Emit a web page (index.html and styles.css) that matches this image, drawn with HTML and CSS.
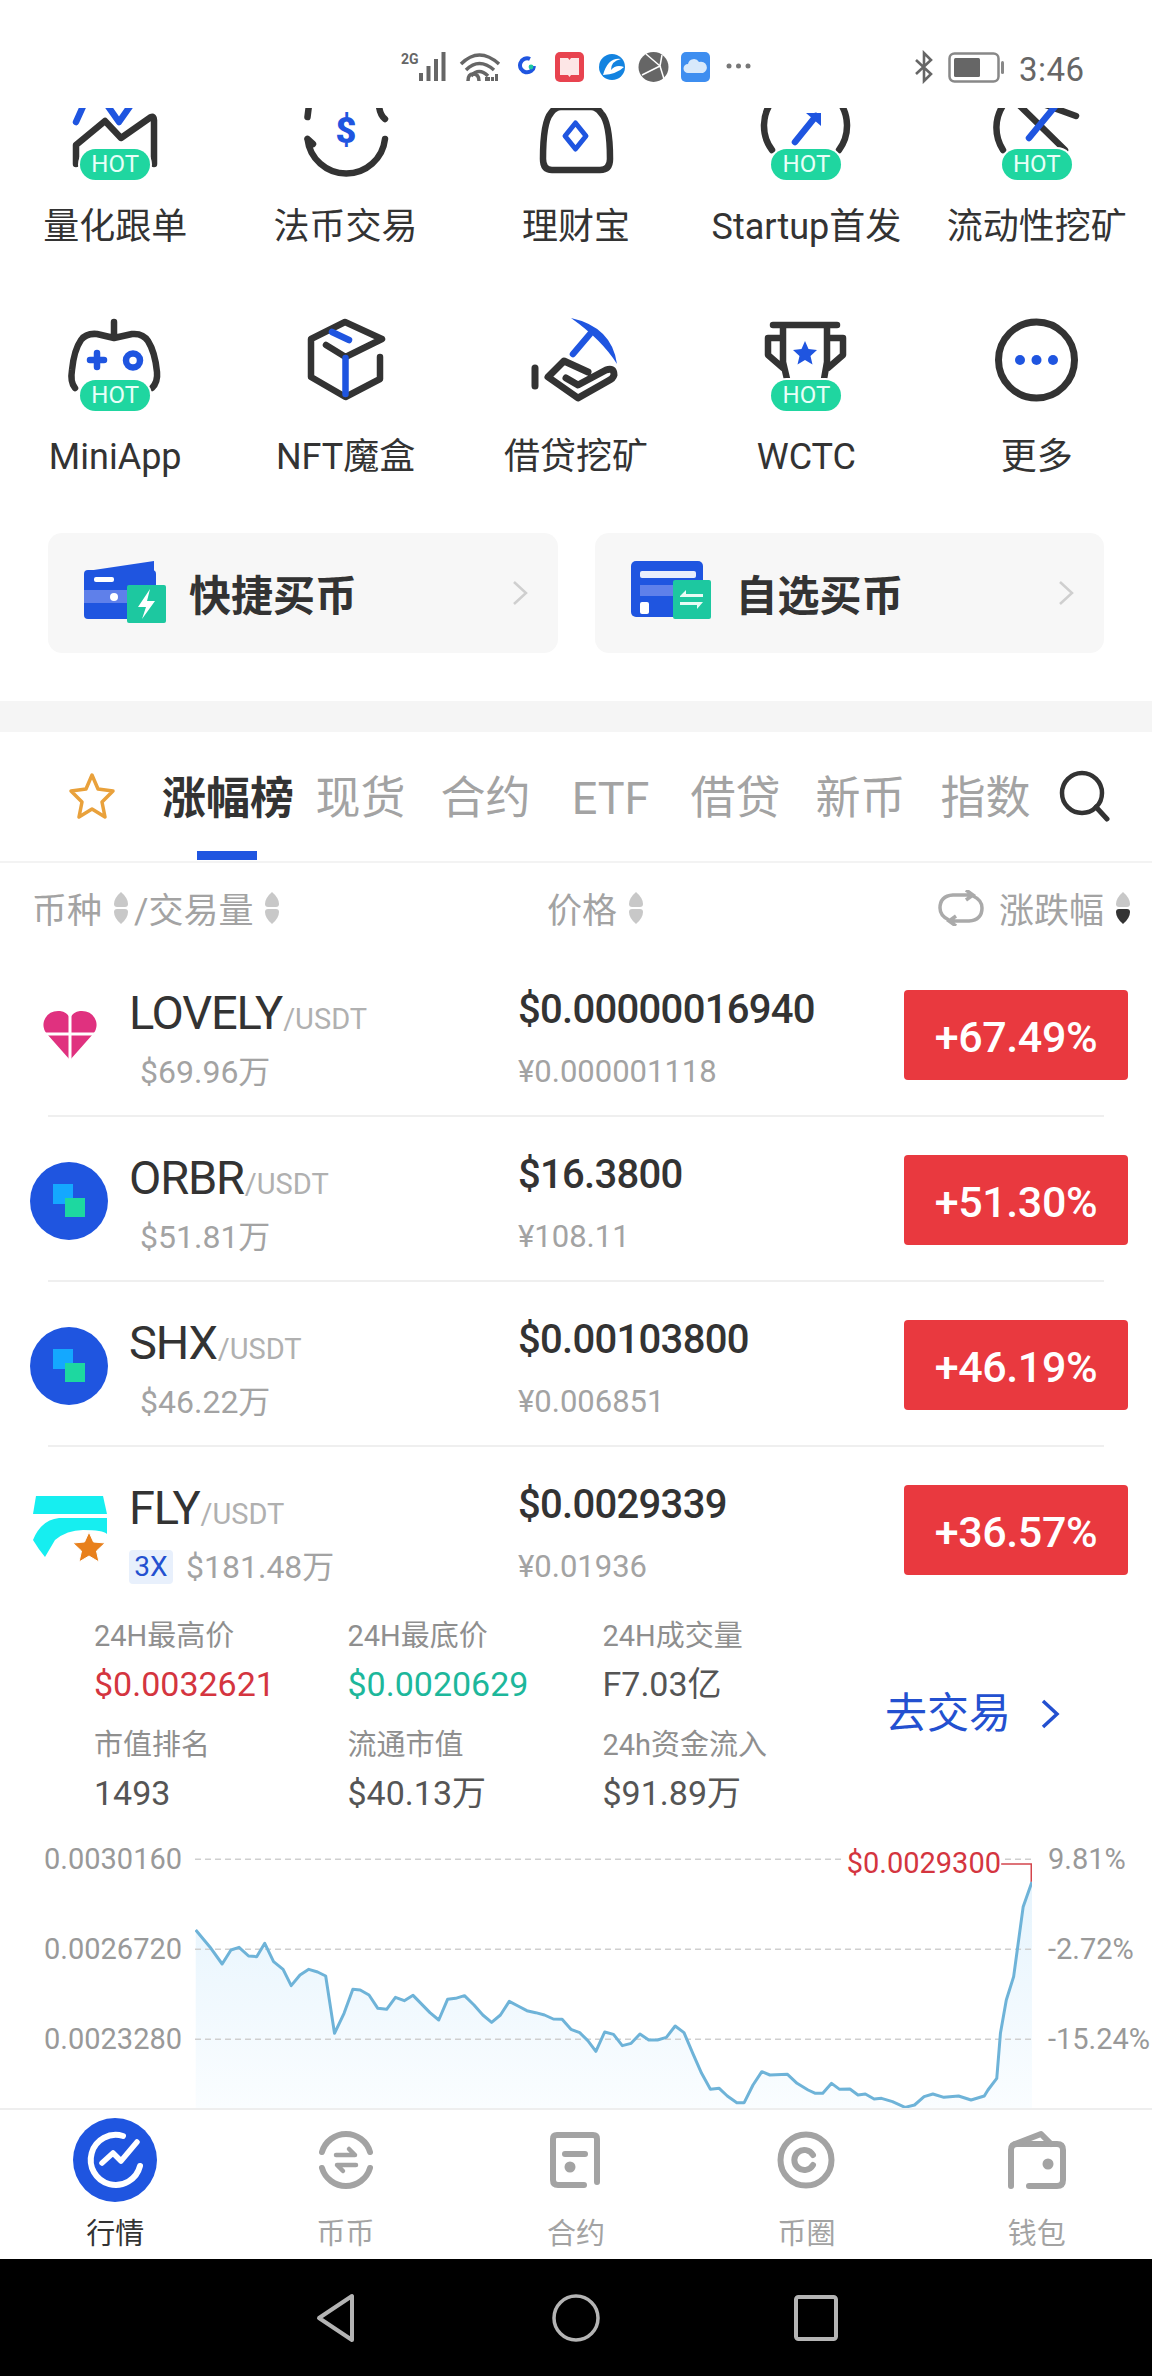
FILE: index.html
```html
<!DOCTYPE html>
<html lang="zh">
<head>
<meta charset="utf-8">
<title>行情</title>
<link rel="stylesheet" href="styles.css">
</head>
<body>
<div class="page">
  <header class="status">
    <svg class="s-signal" viewBox="0 0 49 34"><text x="0" y="14" class="s-2g">2G</text><g fill="#666"><rect x="18" y="23" width="4" height="8"/><rect x="25.500" y="16" width="4" height="15"/><rect x="33" y="9" width="4" height="22"/><rect x="40.500" y="2" width="4" height="29"/></g></svg>
    <svg class="s-wifi" viewBox="0 0 44 34"><g fill="none" stroke="#666" stroke-width="3.500"><path d="M2 14 Q20 -4 40 14"/><path d="M7 20 Q20 7 35 20"/><path d="M12 26 Q20 17 29 26"/><path d="M9 31 Q9 24 14 24 Q20 24 20 31"/></g><g fill="#666"><rect x="26" y="27" width="5" height="4"/><rect x="36" y="24" width="3" height="7"/><rect x="32" y="27" width="3" height="4"/></g></svg>
    <svg class="s-ring" viewBox="0 0 18 34"><path d="M12 9 A7 7 0 1 0 16 16" fill="none" stroke="#1f55e0" stroke-width="4"/><circle cx="13" cy="17" r="2.4" fill="#1dc8a0"/></svg>
    <svg class="s-book" viewBox="0 0 29 34"><rect x="0" y="2" width="29" height="30" rx="5" fill="#e8434f"/><path d="M5 8 H13 L14.500 10 L16 8 H24 V25 H16 L14.500 27 L13 25 H5Z" fill="#fde6e6"/></svg>
    <svg class="s-swirl" viewBox="0 0 26 34"><circle cx="13" cy="17" r="13" fill="#1383e0"/><path d="M4 25 Q9 7 22 9 Q12 11 12 20 Q17 14 25 17 Q18 24 4 25Z" fill="#fff"/></svg>
    <svg class="s-ball" viewBox="0 0 31 34"><circle cx="15.500" cy="17" r="15" fill="#666"/><path d="M8 4 L22 16 L4 25 M22 16 L26 29 M22 16 L24 5" fill="none" stroke="#fff" stroke-width="1.500"/></svg>
    <svg class="s-cloud" viewBox="0 0 29 34"><rect x="0" y="2" width="29" height="30" rx="5" fill="#3e8ef0"/><path d="M7 23 A4.500 4.500 0 0 1 7 14 A6 6 0 0 1 18 12 A5.500 5.500 0 0 1 22 23Z" fill="#d8e9fb"/></svg>
    <svg class="s-dots" viewBox="0 0 25 34"><g fill="#777"><circle cx="3" cy="16" r="2.500"/><circle cx="12.500" cy="16" r="2.500"/><circle cx="22" cy="16" r="2.500"/></g></svg>
    <svg class="s-bt" viewBox="0 0 22 34"><path d="M3 10 L18 24 L11 31 V3 L18 10 L3 24" fill="none" stroke="#666" stroke-width="2.600"/></svg>
    <svg class="s-batt" viewBox="0 0 56 34"><rect x="1.500" y="3.500" width="49" height="28" rx="5" fill="none" stroke="#888" stroke-width="2.500"/><rect x="6" y="8" width="26" height="19" rx="1.500" fill="#666"/><rect x="53" y="11" width="3" height="13" rx="1.500" fill="#888"/></svg>
    <span class="time">3:46</span>
  </header>

  <nav class="grid grid-top">
    <a class="cell">
      <div class="ico">
        <svg class="ico-top" viewBox="0 0 120 72"><path class="dk" d="M21 56 V37 L50 13 L66 30 L96 9 Q99 8 99 12 V56"/><path class="bl" d="M21 14 L30 -6 M50 -6 L64 14 L78 -6"/></svg>
        <span class="hot hot-top">HOT</span>
      </div>
      <span class="lbl">量化跟单</span>
    </a>
    <a class="cell">
      <div class="ico">
        <svg class="ico-top" viewBox="0 0 120 72"><path class="dk" d="M23 -3 L21.500 9 M93 -2 Q94 7 99 11 M21.500 31 A39 39 0 0 0 99 31 M21.500 31 L27 36"/><text x="60" y="35" class="dollar">$</text></svg>
      </div>
      <span class="lbl">法币交易</span>
    </a>
    <a class="cell">
      <div class="ico">
        <svg class="ico-top" viewBox="0 0 120 72"><path class="dk" d="M27 51 Q27 14 35 5 Q39 -1 45 -1 H75 Q81 -1 85 5 Q94 14 94 51 Q94 62 84 62 H36 Q27 62 27 51Z"/><path class="bl bl-thin" d="M59.500 15 L70 28 L59.500 41 L49 28Z"/></svg>
      </div>
      <span class="lbl">理财宝</span>
    </a>
    <a class="cell">
      <div class="ico">
        <svg class="ico-top" viewBox="0 0 120 72"><path class="dk" d="M27 -8 A41 41 0 0 0 26 42 M92 -8 A41 41 0 0 1 93 42"/><path class="bl" d="M49 34 L70 8"/><path class="bl-fill" d="M60 5 H75 V18 Z"/></svg>
        <span class="hot hot-top">HOT</span>
      </div>
      <span class="lbl">Startup首发</span>
    </a>
    <a class="cell">
      <div class="ico">
        <svg class="ico-top" viewBox="0 0 120 72"><path class="dk" d="M27 -4 A41 41 0 0 0 26 42 M41 -4 L88 42 M66 -4 L99 8"/><path class="bl" d="M52 30 L80 -4"/></svg>
        <span class="hot hot-top">HOT</span>
      </div>
      <span class="lbl">流动性挖矿</span>
    </a>
  </nav>

  <nav class="grid grid-bot">
    <a class="cell">
      <div class="ico">
        <svg class="ico-bot" viewBox="0 0 120 105"><path class="dk" d="M59 12 V28 M20 78 Q15 72 17 60 Q19 40 26 30 Q31 23 42 24 L59 28 L77 24 Q88 23 93 31 Q100 42 102 62 Q103 72 97 78"/><path class="bl" d="M35 50 H49 M42 43 V57"/><circle cx="78" cy="50.500" r="7" class="bl"/></svg>
        <span class="hot hot-bot">HOT</span>
      </div>
      <span class="lbl">MiniApp</span>
    </a>
    <a class="cell">
      <div class="ico">
        <svg class="ico-bot" viewBox="0 0 120 105"><path class="dk" d="M40 35 L59.500 47 L96 29 L59 12 L25 29 V67 L59.500 87 L94 69 V47"/><path class="bl" d="M46 22 L63 30 M59.500 48 V84"/></svg>
      </div>
      <span class="lbl">NFT魔盒</span>
    </a>
    <a class="cell">
      <div class="ico">
        <svg class="ico-bot" viewBox="0 0 120 105"><path class="bl-fill" d="M55 8 Q96 17 101 54 Q86 30 55 8Z"/><path class="bl" d="M74 24 L57 44"/><path class="dk dk-7" d="M19 58 V76 M50 68 L62 75 L90 60 Q98 57 98 65 Q97 69 92 71 L62 88 L32 67 L48 51 L72 62"/></svg>
      </div>
      <span class="lbl">借贷挖矿</span>
    </a>
    <a class="cell">
      <div class="ico">
        <svg class="ico-bot" viewBox="0 0 120 105"><path class="dk" d="M27 15 H91 M37 18 V52 L41 69 M81 18 V52 L78 69 M36 28 H22 V45 L37 58 M82 28 H97 V45 L82 58"/><path class="bl-fill" d="M59 31 L62.500 39 L71 40 L64.500 46 L66.500 54.500 L59 50 L51.500 54.500 L53.500 46 L47 40 L55.500 39Z"/></svg>
        <span class="hot hot-bot">HOT</span>
      </div>
      <span class="lbl">WCTC</span>
    </a>
    <a class="cell">
      <div class="ico">
        <svg class="ico-bot" viewBox="0 0 120 105"><circle cx="59.500" cy="50" r="38" class="dk dk-7"/><g class="bl-fill"><circle cx="43" cy="50" r="5"/><circle cx="59.500" cy="50" r="5"/><circle cx="76" cy="50" r="5"/></g></svg>
      </div>
      <span class="lbl">更多</span>
    </a>
  </nav>

  <div class="buy">
    <a class="buy-card">
      <svg class="buy-ico" viewBox="0 0 82 62"><path d="M3 10 L70 0 V10Z" fill="#1f55e0"/><rect x="0" y="9" width="72" height="49" rx="4" fill="#1f55e0"/><rect x="0" y="29" width="72" height="13" fill="#5f80ea"/><rect x="10" y="16" width="20" height="5" rx="2" fill="#fff"/><circle cx="30" cy="36" r="4" fill="#fff"/><rect x="43" y="24" width="39" height="38" rx="2" fill="#1dc8a0"/><path d="M66 28 L54 46 H62 L58 58 L71 40 H63Z" fill="#fff"/></svg>
      <span class="buy-txt">快捷买币</span>
      <svg class="buy-arrow" viewBox="0 0 16 26"><path d="M2 2 L14 13 L2 24" fill="none" stroke="#cfcfcf" stroke-width="2.500"/></svg>
    </a>
    <a class="buy-card">
      <svg class="buy-ico buy-ico2" viewBox="0 0 82 62"><rect x="0" y="1" width="72" height="56" rx="5" fill="#1f55e0"/><rect x="9" y="11" width="56" height="7" rx="2" fill="#e8eefc"/><rect x="9" y="25" width="55" height="11" fill="#5f80ea"/><rect x="9" y="42" width="9" height="12" rx="2" fill="#fff"/><rect x="42" y="20" width="38" height="39" rx="2" fill="#1dc8a0"/><path d="M49 36 L55 30 V34 H72 V37 H49Z M72 42 L66 49 V45 H49 V42Z" fill="#e8fbf5"/></svg>
      <span class="buy-txt">自选买币</span>
      <svg class="buy-arrow" viewBox="0 0 16 26"><path d="M2 2 L14 13 L2 24" fill="none" stroke="#cfcfcf" stroke-width="2.500"/></svg>
    </a>
  </div>

  <div class="band"></div>

  <div class="tabs">
    <svg class="star" viewBox="0 0 50 50"><path d="M25 4 L31 18 L46 20 L35 31 L38 46 L25 38 L12 46 L15 31 L4 20 L19 18Z" fill="none" stroke="#e9a13b" stroke-width="3.500" stroke-linejoin="round"/></svg>
    <span class="tab-active">涨幅榜</span>
    <span class="tab">现货</span>
    <span class="tab">合约</span>
    <span class="tab">ETF</span>
    <span class="tab">借贷</span>
    <span class="tab">新币</span>
    <span class="tab">指数</span>
    <svg class="search" viewBox="0 0 52 52"><circle cx="24" cy="23" r="20" fill="none" stroke="#333" stroke-width="4.500"/><path d="M38 37 L49 49" stroke="#333" stroke-width="5" stroke-linecap="round"/></svg>
  </div>

  <div class="thead">
    <div class="th th-coin">
      <span>币种</span>
      <svg class="sort" viewBox="0 0 18 32"><path class="sort-off" d="M9 0 Q16 6 16 12 Q16 15 13 15 H5 Q2 15 2 12 Q2 6 9 0Z"/><path class="sort-off" d="M9 32 Q16 26 16 20 Q16 17 13 17 H5 Q2 17 2 20 Q2 26 9 32Z"/></svg>
      <span class="th-slash">/交易量</span>
      <svg class="sort" viewBox="0 0 18 32"><path class="sort-off" d="M9 0 Q16 6 16 12 Q16 15 13 15 H5 Q2 15 2 12 Q2 6 9 0Z"/><path class="sort-off" d="M9 32 Q16 26 16 20 Q16 17 13 17 H5 Q2 17 2 20 Q2 26 9 32Z"/></svg>
    </div>
    <div class="th th-price">
      <span>价格</span>
      <svg class="sort" viewBox="0 0 18 32"><path class="sort-off" d="M9 0 Q16 6 16 12 Q16 15 13 15 H5 Q2 15 2 12 Q2 6 9 0Z"/><path class="sort-off" d="M9 32 Q16 26 16 20 Q16 17 13 17 H5 Q2 17 2 20 Q2 26 9 32Z"/></svg>
    </div>
    <div class="th th-change">
      <svg class="swap" viewBox="0 0 48 36"><path d="M12 30 Q3 26 3 18 Q3 6 16 5 H34 M36 6 Q45 10 45 18 Q45 30 32 31 H14 M29 0 L36 5 L29 10 M19 26 L12 31 L19 36" fill="none" stroke="#aaa" stroke-width="3.500"/></svg>
      <span>涨跌幅</span>
      <svg class="sort" viewBox="0 0 18 32"><path class="sort-off" d="M9 0 Q16 6 16 12 Q16 15 13 15 H5 Q2 15 2 12 Q2 6 9 0Z"/><path class="sort-on" d="M9 32 Q16 26 16 20 Q16 17 13 17 H5 Q2 17 2 20 Q2 26 9 32Z"/></svg>
    </div>
  </div>

  <div class="mrow">
    <div class="tok">
      <svg class="tok-heart" viewBox="0 0 56 50"><path d="M28 50 L5 24 Q0 18 2 11 Q6 0 18 1 Q25 2 28 8 Q31 2 38 1 Q50 0 54 11 Q56 18 51 24Z" fill="#e0317f"/><path d="M28 4 V50 M0 24 H56" stroke="#fff" stroke-width="3"/></svg>
    </div>
    <div class="info">
      <div class="sym">LOVELY<small>/USDT</small></div>
      <div class="vol">$69.96万</div>
    </div>
    <div class="px">
      <div class="usd">$0.00000016940</div>
      <div class="cny">¥0.000001118</div>
    </div>
    <div class="chg">+67.49%</div>
  </div>
  <div class="mrow">
    <div class="tok">
      <svg class="tok-c" viewBox="0 0 78 78"><circle cx="39" cy="39" r="39" fill="#1f55e0"/><rect x="23" y="22" width="20" height="20" fill="#14a8ff"/><rect x="35" y="36" width="20" height="19" fill="#1dd8a0"/></svg>
    </div>
    <div class="info">
      <div class="sym">ORBR<small>/USDT</small></div>
      <div class="vol">$51.81万</div>
    </div>
    <div class="px">
      <div class="usd">$16.3800</div>
      <div class="cny">¥108.11</div>
    </div>
    <div class="chg">+51.30%</div>
  </div>
  <div class="mrow">
    <div class="tok">
      <svg class="tok-c" viewBox="0 0 78 78"><circle cx="39" cy="39" r="39" fill="#1f55e0"/><rect x="23" y="22" width="20" height="20" fill="#14a8ff"/><rect x="35" y="36" width="20" height="19" fill="#1dd8a0"/></svg>
    </div>
    <div class="info">
      <div class="sym">SHX<small>/USDT</small></div>
      <div class="vol">$46.22万</div>
    </div>
    <div class="px">
      <div class="usd">$0.00103800</div>
      <div class="cny">¥0.006851</div>
    </div>
    <div class="chg">+46.19%</div>
  </div>
  <div class="mrow mrow-last">
    <div class="tok">
      <svg class="tok-fly" viewBox="0 0 78 72"><path d="M5 0 H72 L76 18 H2Z" fill="#16eef0"/><path d="M2 44 Q10 24 28 22 H76 V38 Q72 34 52 34 Q36 34 24 44 L14 61 Q8 54 2 44Z" fill="#16eef0"/><path d="M58 36 L62.500 46 L74 47 L65.500 55 L68 66 L58 60 L48 66 L50.500 55 L42 47 L53.500 46Z" fill="#e8801c" stroke="#fff" stroke-width="1"/></svg>
    </div>
    <div class="info">
      <div class="sym">FLY<small>/USDT</small></div>
      <div class="vol vol-lev"><span class="lev">3X</span><span>$181.48万</span></div>
    </div>
    <div class="px">
      <div class="usd">$0.0029339</div>
      <div class="cny">¥0.01936</div>
    </div>
    <div class="chg">+36.57%</div>
  </div>

  <div class="detail">
    <div class="stats">
      <div class="stat"><span class="k">24H最高价</span><span class="v v-red">$0.0032621</span></div>
      <div class="stat"><span class="k">24H最底价</span><span class="v v-green">$0.0020629</span></div>
      <div class="stat"><span class="k">24H成交量</span><span class="v">F7.03亿</span></div>
      <div class="stat"><span class="k">市值排名</span><span class="v">1493</span></div>
      <div class="stat"><span class="k">流通市值</span><span class="v">$40.13万</span></div>
      <div class="stat"><span class="k">24h资金流入</span><span class="v">$91.89万</span></div>
    </div>
    <a class="go">去交易<svg class="go-arrow" viewBox="0 0 20 30"><path d="M3 2 L17 15 L3 28" fill="none" stroke="#2350d0" stroke-width="3.500"/></svg></a>
  </div>

  <div class="chart">
    <div class="axis axis-l"><span>0.0030160</span><span>0.0026720</span><span>0.0023280</span></div>
    <svg class="plot" viewBox="265 642 1140 882" preserveAspectRatio="none">
      <defs><linearGradient id="area" x1="0" y1="0" x2="0" y2="1"><stop offset="0" stop-color="#e6f4fd"/><stop offset="1" stop-color="#fafdff"/></linearGradient></defs>
      <path fill="url(#area)" d="M266 990 L285 1040 L302 1092 L314 1050 L325 1042 L338 1068 L349 1070 L360 1030 L372 1085 L385 1108 L396 1157 L408 1125 L420 1108 L432 1116 L443 1128 L455 1300 L468 1240 L480 1168 L490 1170 L502 1185 L514 1225 L526 1228 L538 1192 L550 1202 L562 1186 L585 1238 L597 1260 L609 1198 L620 1195 L632 1187 L645 1215 L657 1245 L669 1267 L681 1245 L693 1204 L705 1218 L717 1232 L729 1238 L741 1245 L753 1257 L765 1258 L777 1288 L789 1298 L800 1322 L811 1354 L823 1296 L835 1303 L847 1337 L859 1330 L871 1302 L883 1320 L895 1320 L907 1312 L919 1278 L931 1298 L943 1360 L955 1420 L967 1468 L979 1465 L990 1488 L1003 1508 L1013 1508 L1025 1455 L1037 1415 L1048 1425 L1072 1423 L1085 1450 L1100 1470 L1110 1480 L1120 1480 L1132 1450 L1143 1468 L1157 1467 L1168 1485 L1178 1482 L1190 1497 L1200 1495 L1215 1505 L1232 1522 L1245 1515 L1258 1490 L1270 1482 L1285 1492 L1305 1488 L1322 1500 L1340 1488 L1345 1470 L1357 1435 L1362 1300 L1370 1200 L1380 1130 L1393 920 L1405 845 V1524 H266Z"/>
      <g class="grid-line"><path d="M265 778 H1405"/><path d="M265 1048 H1405"/><path d="M265 1318 H1405"/></g>
      <path class="price-line" d="M266 990 L285 1040 L302 1092 L314 1050 L325 1042 L338 1068 L349 1070 L360 1030 L372 1085 L385 1108 L396 1157 L408 1125 L420 1108 L432 1116 L443 1128 L455 1300 L468 1240 L480 1168 L490 1170 L502 1185 L514 1225 L526 1228 L538 1192 L550 1202 L562 1186 L585 1238 L597 1260 L609 1198 L620 1195 L632 1187 L645 1215 L657 1245 L669 1267 L681 1245 L693 1204 L705 1218 L717 1232 L729 1238 L741 1245 L753 1257 L765 1258 L777 1288 L789 1298 L800 1322 L811 1354 L823 1296 L835 1303 L847 1337 L859 1330 L871 1302 L883 1320 L895 1320 L907 1312 L919 1278 L931 1298 L943 1360 L955 1420 L967 1468 L979 1465 L990 1488 L1003 1508 L1013 1508 L1025 1455 L1037 1415 L1048 1425 L1072 1423 L1085 1450 L1100 1470 L1110 1480 L1120 1480 L1132 1450 L1143 1468 L1157 1467 L1168 1485 L1178 1482 L1190 1497 L1200 1495 L1215 1505 L1232 1522 L1245 1515 L1258 1490 L1270 1482 L1285 1492 L1305 1488 L1322 1500 L1340 1488 L1345 1470 L1357 1435 L1362 1300 L1370 1200 L1380 1130 L1393 920 L1405 845"/>
      <path class="lead" d="M1363 792 H1404 V845"/>
    </svg>
    <span class="last-price">$0.0029300</span>
    <div class="axis axis-r"><span>9.81%</span><span>-2.72%</span><span>-15.24%</span></div>
  </div>

  <footer class="tabbar">
    <a class="tb tb-on">
      <svg class="tb-ico" viewBox="0 0 84 84"><circle cx="42" cy="42" r="42" fill="#1f55e0"/><path d="M50 18 A25 25 0 1 0 67 48" fill="none" stroke="#fff" stroke-width="6" stroke-linecap="round"/><path d="M29 45 L40 35 L48 43 L64 24" fill="none" stroke="#fff" stroke-width="5.500" stroke-linecap="round" stroke-linejoin="round"/></svg>
      <span>行情</span>
    </a>
    <a class="tb">
      <svg class="tb-ico" viewBox="0 0 84 84"><path class="tg" d="M18 34 A25 25 0 0 1 66 34 M18 50 A25 25 0 0 0 66 50"/><path class="tg tg-thin" d="M32 37 H51 L45 31 M52 47 H33 L39 53"/></svg>
      <span>币币</span>
    </a>
    <a class="tb">
      <svg class="tb-ico" viewBox="0 0 84 84"><path class="tg" d="M63 64 V21 Q63 17 59 17 H23 Q19 17 19 21 V62 Q19 67 24 67 H50"/><path class="tg" d="M31 36 H51"/><circle cx="36" cy="49" r="5.500" fill="#a3a3a3"/></svg>
      <span>合约</span>
    </a>
    <a class="tb">
      <svg class="tb-ico" viewBox="0 0 84 84"><circle class="tg" cx="42" cy="42" r="25.500"/><path class="tg" d="M49 37 A10 10 0 1 0 49 47"/></svg>
      <span>币圈</span>
    </a>
    <a class="tb">
      <svg class="tb-ico" viewBox="0 0 84 84"><path class="tg" d="M16 68 V32 Q16 26 22 26 H62 Q68 26 68 32 V62 Q68 68 62 68 H34"/><path class="tg" d="M20 26 L46 16 L56 26"/><circle cx="53" cy="46" r="5.500" fill="#a3a3a3"/></svg>
      <span>钱包</span>
    </a>
  </footer>

  <div class="sysnav">
    <svg class="n-back" viewBox="0 0 40 50"><path d="M36 3 V47 L3 25Z" fill="none" stroke="#b4b4b4" stroke-width="4" stroke-linejoin="round"/></svg>
    <svg class="n-home" viewBox="0 0 48 50"><circle cx="24" cy="25" r="22" fill="none" stroke="#b4b4b4" stroke-width="3.500"/></svg>
    <svg class="n-rec" viewBox="0 0 44 46"><rect x="2" y="2" width="40" height="42" rx="2.500" fill="none" stroke="#b4b4b4" stroke-width="4"/></svg>
  </div>
</div>
</body>
</html>
```

FILE: styles.css
```css
* { box-sizing: border-box; }
html, body { margin: 0; padding: 0; background: #fff; }
body {
  font-family: Roboto, "Noto Sans CJK SC", sans-serif;
  color: #333;
}
a { color: inherit; text-decoration: none; }
svg { display: block; flex: none; }

.page {
  width: 1152px;
  height: 2376px;
  overflow: hidden;
  display: flex;
  flex-direction: column;
}

/* status bar */
.status {
  height: 108px;
  flex: none;
  padding: 50px 0 0 401px;
  display: flex;
  align-items: flex-start;
}
.status svg { height: 34px; }
.s-2g { font-size: 14px; font-weight: 700; fill: #666; font-family: Roboto, sans-serif; }
.s-signal { width: 49px; }
.s-wifi { width: 44px; margin-left: 9px; }
.s-ring { width: 18px; margin-left: 15px; }
.s-book { width: 29px; margin-left: 19px; }
.s-swirl { width: 26px; margin-left: 15px; }
.s-ball { width: 31px; margin-left: 13px; }
.s-cloud { width: 29px; margin-left: 12px; }
.s-dots { width: 25px; margin-left: 16px; }
.s-bt { width: 22px; margin-left: 162px; }
.s-batt { width: 56px; margin-left: 13px; }
.time {
  margin-left: 15px;
  font-size: 33px;
  line-height: 40px;
  color: #666;
  letter-spacing: 0.5px;
}

/* shortcut grid */
.grid {
  display: grid;
  grid-template-columns: repeat(5, 1fr);
  flex: none;
}
.grid-top { height: 202px; }
.grid-bot { height: 171px; }
.cell {
  display: flex;
  flex-direction: column;
  align-items: center;
}
.ico { position: relative; width: 120px; }
.ico-top { width: 120px; height: 72px; }
.ico-bot { width: 120px; height: 105px; }
.grid-top .lbl { margin-top: 22px; }
.grid-bot .lbl { margin-top: 17px; }
.lbl {
  font-size: 36px;
  line-height: 50px;
  color: #333;
  white-space: nowrap;
}
.dk { fill: none; stroke: #333; stroke-width: 6.5; stroke-linecap: round; stroke-linejoin: round; }
.dk-7 { stroke-width: 7; }
.bl { fill: none; stroke: #1f55e0; stroke-width: 6.5; stroke-linecap: round; stroke-linejoin: round; }
.bl-thin { stroke-width: 5; }
.bl-fill { fill: #1f55e0; }
.dollar { font-size: 36px; font-weight: 900; fill: #1f55e0; text-anchor: middle; font-family: Roboto, sans-serif; }
.hot {
  position: absolute;
  left: 25px;
  width: 70px;
  height: 31px;
  border-radius: 15.5px;
  background: #1fd6a0;
  box-shadow: 0 0 0 2px #fff;
  color: #e8fff8;
  font-size: 24px;
  line-height: 31px;
  text-align: center;
}
.hot-top { top: 41px; }
.hot-bot { top: 70px; }

/* buy cards */
.buy {
  margin: 52px 48px 0;
  display: flex;
  gap: 37px;
  flex: none;
}
.buy-card {
  flex: 1;
  height: 120px;
  background: #f7f7f7;
  border-radius: 14px;
  display: flex;
  align-items: center;
  padding: 0 30px 0 36px;
}
.buy-ico { width: 82px; height: 62px; margin-bottom: 2px; }
.buy-ico2 { margin-bottom: 4px; }
.buy-txt {
  margin-left: 23px;
  font-size: 42px;
  font-weight: 700;
  line-height: 60px;
  padding-top: 8px;
  color: #333;
  flex: 1;
}
.buy-arrow { width: 16px; height: 26px; }

.band { height: 31px; margin-top: 48px; background: #f5f5f5; flex: none; }

/* tabs */
.tabs {
  height: 131px;
  flex: none;
  border-bottom: 2px solid #f3f3f3;
  display: flex;
  align-items: center;
  padding: 4px 0 0 67px;
}
.star { width: 50px; height: 50px; margin-top: -6px; }
.tab-active {
  position: relative;
  width: 181px;
  padding-left: 45px;
  font-size: 44px;
  font-weight: 700;
  color: #333;
  line-height: 60px;
  white-space: nowrap;
}
.tab-active::after {
  content: "";
  position: absolute;
  left: 80px;
  width: 60px;
  bottom: -31px;
  height: 9px;
  background: #1f55e0;
}
.tab {
  width: 125px;
  text-align: center;
  font-size: 45px;
  line-height: 60px;
  color: #a3a3a3;
  white-space: nowrap;
}
.search { width: 52px; height: 52px; margin: -6px 0 0 10px; }

/* table head */
.thead {
  height: 89px;
  flex: none;
  display: flex;
  align-items: center;
  font-size: 35px;
  color: #a3a3a3;
}
.th { display: flex; align-items: center; white-space: nowrap; }
.th-coin { width: 547px; padding-left: 32px; }
.th-price { width: 370px; }
.th-change { width: 235px; padding-left: 20px; }
.sort { width: 20px; height: 32px; margin-left: 9px; }
.sort-off { fill: #c8c8c8; }
.sort-on { fill: #333; }
.th-slash { margin-left: 3px; }
.swap { width: 48px; height: 36px; margin-right: 14px; }

/* market rows */
.mrow {
  position: relative;
  height: 165px;
  flex: none;
  display: flex;
  align-items: flex-start;
  padding-left: 30px;
}
.mrow::after {
  content: "";
  position: absolute;
  left: 48px;
  right: 48px;
  bottom: 0;
  height: 2px;
  background: #efefef;
}
.mrow-last::after { display: none; }
.tok { width: 99px; padding-top: 52px; flex: none; }
.tok-c { width: 78px; height: 78px; margin-top: -7px; }
.tok-heart { width: 56px; height: 50px; margin: 6px 0 0 12px; }
.tok-fly { width: 78px; height: 72px; margin: -3px 0 0 1px; }
.info { width: 389px; padding-top: 30px; flex: none; }
.sym {
  font-size: 47px;
  line-height: 62px;
  letter-spacing: -1.2px;
  color: #333;
  white-space: nowrap;
}
.sym small {
  font-size: 29px;
  color: #b0b0b0;
  letter-spacing: 0;
  margin-left: 1px;
}
.vol {
  margin-top: -6px;
  padding-left: 11px;
  font-size: 32px;
  line-height: 56px;
  color: #a3a3a3;
  white-space: nowrap;
}
.vol-lev { padding-left: 0; display: flex; align-items: center; }
.lev {
  width: 44px;
  height: 34px;
  background: #e8f0fc;
  border-radius: 4px;
  color: #2350d0;
  font-size: 28px;
  line-height: 34px;
  text-align: center;
  margin-right: 13px;
}
.px { width: 386px; padding-top: 27px; flex: none; }
.usd {
  font-size: 40px;
  font-weight: 500;
  line-height: 62px;
  color: #333;
  letter-spacing: -0.7px;
  white-space: nowrap;
}
.cny {
  margin-top: -1px;
  font-size: 31px;
  line-height: 64px;
  color: #a3a3a3;
  white-space: nowrap;
}
.chg {
  width: 224px;
  height: 90px;
  margin-top: 38px;
  background: #e9393f;
  border-radius: 4px;
  color: #fff;
  font-size: 43px;
  font-weight: 500;
  line-height: 95px;
  text-align: center;
  letter-spacing: -0.4px;
}

/* detail */
.detail {
  height: 202px;
  flex: none;
  display: flex;
  align-items: flex-start;
  padding: 4px 0 0 94px;
}
.stats {
  width: 791px;
  display: grid;
  grid-template-columns: 253.500px 255px 1fr;
  row-gap: 13px;
}
.stat { display: flex; flex-direction: column; }
.k { font-size: 29px; line-height: 40px; color: #8f8f8f; white-space: nowrap; }
.v { font-size: 34px; line-height: 56px; color: #555; white-space: nowrap; }
.v-red { color: #d4353f; }
.v-green { color: #1db79b; }
.go {
  display: flex;
  align-items: center;
  margin-top: 73px;
  font-size: 42px;
  line-height: 50px;
  color: #2350d0;
}
.go-arrow { width: 20px; height: 30px; margin-left: 29px; }

/* chart */
.chart {
  position: relative;
  height: 294px;
  flex: none;
  display: flex;
}
.axis { display: flex; flex-direction: column; font-size: 29px; color: #999; flex: none; }
.axis span { height: 90px; line-height: 90px; white-space: nowrap; }
.axis-l { width: 195px; padding-left: 44px; }
.axis-r { width: 120px; padding-left: 16px; overflow: hidden; }
.plot { width: 837px; height: 294px; }
.grid-line path { fill: none; stroke: #cfcfcf; stroke-width: 1.5; stroke-dasharray: 6 4; vector-effect: non-scaling-stroke; }
.price-line { fill: none; stroke: #6eb3d8; stroke-width: 3; stroke-linejoin: round; vector-effect: non-scaling-stroke; }
.lead { fill: none; stroke: #d4454c; stroke-width: 1.5; vector-effect: non-scaling-stroke; }
.last-price {
  position: absolute;
  right: 151px;
  top: 30px;
  padding-left: 4px;
  background: #fff;
  font-size: 29px;
  line-height: 38px;
  color: #d4353f;
}

/* bottom tabs */
.tabbar {
  height: 151px;
  flex: none;
  display: grid;
  grid-template-columns: repeat(5, 1fr);
  border-top: 2px solid #eeeeee;
  padding-top: 8px;
  background: #fff;
}
.tb { display: flex; flex-direction: column; align-items: center; color: #a3a3a3; }
.tb-on { color: #333; }
.tb-ico { width: 84px; height: 84px; }
.tb span { font-size: 29px; line-height: 40px; margin-top: 12px; }
.tg { fill: none; stroke: #a3a3a3; stroke-width: 6; stroke-linecap: round; stroke-linejoin: round; }
.tg-thin { stroke-width: 4.5; }

/* system nav */
.sysnav {
  flex: 1;
  background: #000;
  display: flex;
  align-items: center;
  padding-left: 316px;
}
.n-back { width: 40px; height: 50px; }
.n-home { width: 48px; height: 50px; margin-left: 196px; }
.n-rec { width: 44px; height: 46px; margin-left: 194px; }
```
